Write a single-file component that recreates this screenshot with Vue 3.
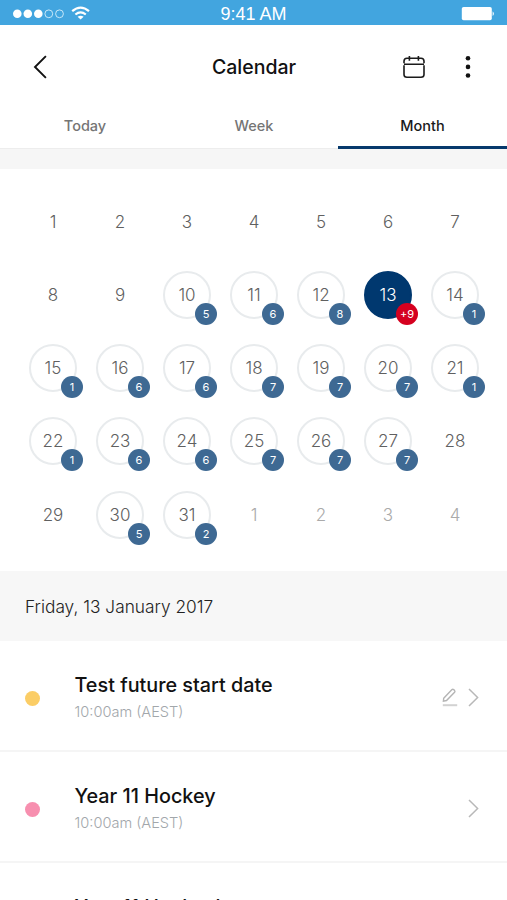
<script setup>
const counts = { 10: 5, 11: 6, 12: 8, 13: '+9', 14: 1, 15: 1, 16: 6, 17: 6, 18: 7, 19: 7, 20: 7, 21: 1, 22: 1, 23: 6, 24: 6, 25: 7, 26: 7, 27: 7, 30: 5, 31: 2 }
const days = Array.from({ length: 35 }, (_, i) => {
  const other = i >= 31
  const n = other ? i - 30 : i + 1
  return { key: i, n, other, count: other ? undefined : counts[n], selected: i === 12 }
})
const tabs = ['Today', 'Week', 'Month']
const events = [
  { title: 'Test future start date', time: '10:00am (AEST)', tone: 'yellow', editable: true },
  { title: 'Year 11 Hockey', time: '10:00am (AEST)', tone: 'pink' },
  { title: 'Year 11 Hockeyl', time: '10:00am (AEST)', tone: 'pink' }
]
</script>

<template>
  <div class="screen">
    <div class="status">
      <svg class="signal" width="82" height="25" viewBox="0 0 82 25">
        <g fill="#fff"><circle cx="7.3" cy="12.8" r="4.3" /><circle cx="17.8" cy="12.8" r="4.3" /><circle cx="28.3" cy="12.8" r="4.3" /></g>
        <g fill="none" stroke="#d5eefb" stroke-width=".9"><circle cx="38.8" cy="12.8" r="3.9" /><circle cx="49.5" cy="12.8" r="3.9" /></g>
        <g fill="none" stroke="#fff" stroke-width="2.2"><path d="M62.2 10.2Q70.6 3 79 10.2" /><path d="M65.4 13.5Q70.6 9.2 75.8 13.5" /></g>
        <path d="M67.6 15.7Q70.6 13.6 73.6 15.7L70.6 18.6Z" fill="#fff" />
      </svg>
      <span class="clock">9:41 AM</span>
      <svg class="battery" width="34" height="25" viewBox="0 0 34 25">
        <rect x=".8" y="6" width="30" height="13.3" rx="1.8" fill="#fff" />
        <path d="M31.6 10.3Q34.2 12.6 31.6 15Z" fill="#fff" />
      </svg>
    </div>

    <header class="header">
      <svg class="back" width="14" height="24" viewBox="0 0 14 24"><path d="M12.9 1.2L2 12L12.9 22.8" fill="none" stroke="#111" stroke-width="1.9" /></svg>
      <h1>Calendar</h1>
      <div class="actions">
        <svg width="22" height="24" viewBox="0 0 22 24" fill="none" stroke="#1b1b1b" stroke-width="1.6">
          <path d="M1 8.3V6.2Q1 3.2 4 3.2H18Q21 3.2 21 6.2V8.3M1 9.2H21M1 10.2V19.5Q1 22.3 4 22.3H18Q21 22.3 21 19.5V10.2" /><path d="M6.4.9V5.8M15.4.9V5.8" />
        </svg>
        <svg width="6" height="24" viewBox="0 0 6 24" fill="#111"><circle cx="3" cy="3.2" r="2.3" /><circle cx="3" cy="11.9" r="2.3" /><circle cx="3" cy="20.5" r="2.3" /></svg>
      </div>
    </header>

    <nav class="tabs">
      <span v-for="t in tabs" :key="t" class="tab" :class="{ active: t === 'Month' }">{{ t }}</span>
    </nav>

    <section class="month">
      <div v-for="d in days" :key="d.key" class="cell">
        <div class="day" :class="{ ring: d.count, selected: d.selected, other: d.other }">
          {{ d.n }}
          <span v-if="d.count" class="badge">{{ d.count }}</span>
        </div>
      </div>
    </section>

    <div class="date">Friday, 13 January 2017</div>

    <article v-for="(e, i) in events" :key="i" class="event">
      <span class="dot" :class="e.tone"></span>
      <div class="info">
        <h2>{{ e.title }}</h2>
        <p>{{ e.time }}</p>
      </div>
      <svg v-if="e.editable" class="pencil" width="16" height="20" viewBox="0 0 16 20" fill="none" stroke="#b4b4b4" stroke-width="1.4">
        <path d="M1.7 11.2L10 2.6Q10.8 1.9 11.6 2.6L12.6 3.6Q13.3 4.4 12.6 5.2L4.5 13.5L1.4 14.2Z" /><path d="M.8 18.2H15.2" stroke="#d2d2d2" stroke-width="2" />
      </svg>
      <svg class="chevron" width="11" height="19" viewBox="0 0 11 19"><path d="M1 1L9.6 9.5L1 18" fill="none" stroke="#b8b8b8" stroke-width="1.5" /></svg>
    </article>
  </div>
</template>

<style>
body { margin: 0; background: #fff; }
</style>

<style scoped>
.screen { width: 507px; height: 900px; overflow: hidden; display: flex; flex-direction: column; background: #fff; font-family: Inter, sans-serif; color: #111; }
.screen > * { flex-shrink: 0; box-sizing: border-box; }
.status { height: 25px; display: grid; grid-template-columns: 1fr auto 1fr; align-items: center; padding: 0 12px 0 10px; background: #42a5df; color: #fff; }
.clock { font: 18px/25px "Liberation Sans", sans-serif; padding: 2px 0 0 2px; letter-spacing: 0; }
.battery { justify-self: end; }
.header { height: 76px; padding: 9px 36px 0 33px; display: grid; grid-template-columns: 1fr auto 1fr; align-items: center; }
.back { margin-bottom: 1px; }
h1 { margin: 0 -2px 1px 2px; font-size: 19.5px; line-height: 24px; font-weight: 500; }
.actions { justify-self: end; display: flex; gap: 40px; margin-bottom: 1px; }
.actions svg { display: block; }
.tabs { height: 68px; display: grid; grid-template-columns: repeat(3, 1fr); background: #fff; border-bottom: 20px solid #f6f6f6; }
.tab { display: flex; align-items: center; justify-content: center; padding: 1px 0 0 1px; font-size: 14.5px; font-weight: 500; color: #757575; border-bottom: 1px solid #ededed; }
.tab.active { color: #1a1a1a; border-bottom: 3px solid #06396c; padding: 3px 0 0; }
.month { height: 402px; padding: 16px 19.5px 20px; display: grid; grid-template-columns: repeat(7, 67px); grid-template-rows: repeat(5, 73.25px); }
.cell { display: flex; align-items: center; justify-content: center; }
.day { position: relative; box-sizing: border-box; width: 48px; height: 48px; display: flex; align-items: center; justify-content: center; border-radius: 50%; border: 2px solid transparent; font-size: 17px; font-weight: 300; color: #606060; }
.ring { border-color: #e8ebed; }
.selected { background: #00386f; border-color: #00386f; color: #fff; }
.other { color: #aaa; }
.badge { position: absolute; right: -8px; bottom: -8px; width: 22px; height: 22px; border-radius: 50%; background: #3e6993; color: #fff; font-size: 11px; line-height: 22px; font-weight: 400; text-align: center; }
.selected .badge { background: #d5001f; }
.date { height: 70px; background: #f7f7f7; padding: 1px 25px 0; display: flex; align-items: center; font-size: 17.3px; font-weight: 300; color: #222; }
.event { height: 111px; padding: 4px 28px 0 25px; display: flex; align-items: center; border-bottom: 2px solid #f5f5f5; }
.dot { width: 15px; height: 15px; border-radius: 50%; margin: 1px 34.5px 0 0; }
.yellow { background: #fbcd66; }
.pink { background: #f78faf; }
.info { flex: 1; margin-top: -1px; }
h2 { margin: 0; font-size: 19.8px; line-height: 28px; font-weight: 500; white-space: nowrap; }
p { margin: 2px 0 0; font-size: 14.6px; line-height: 22px; font-weight: 300; color: #a2a7ab; }
.pencil { margin: 0 10px 2px 0; }
.chevron { margin-bottom: 1px; }
</style>
